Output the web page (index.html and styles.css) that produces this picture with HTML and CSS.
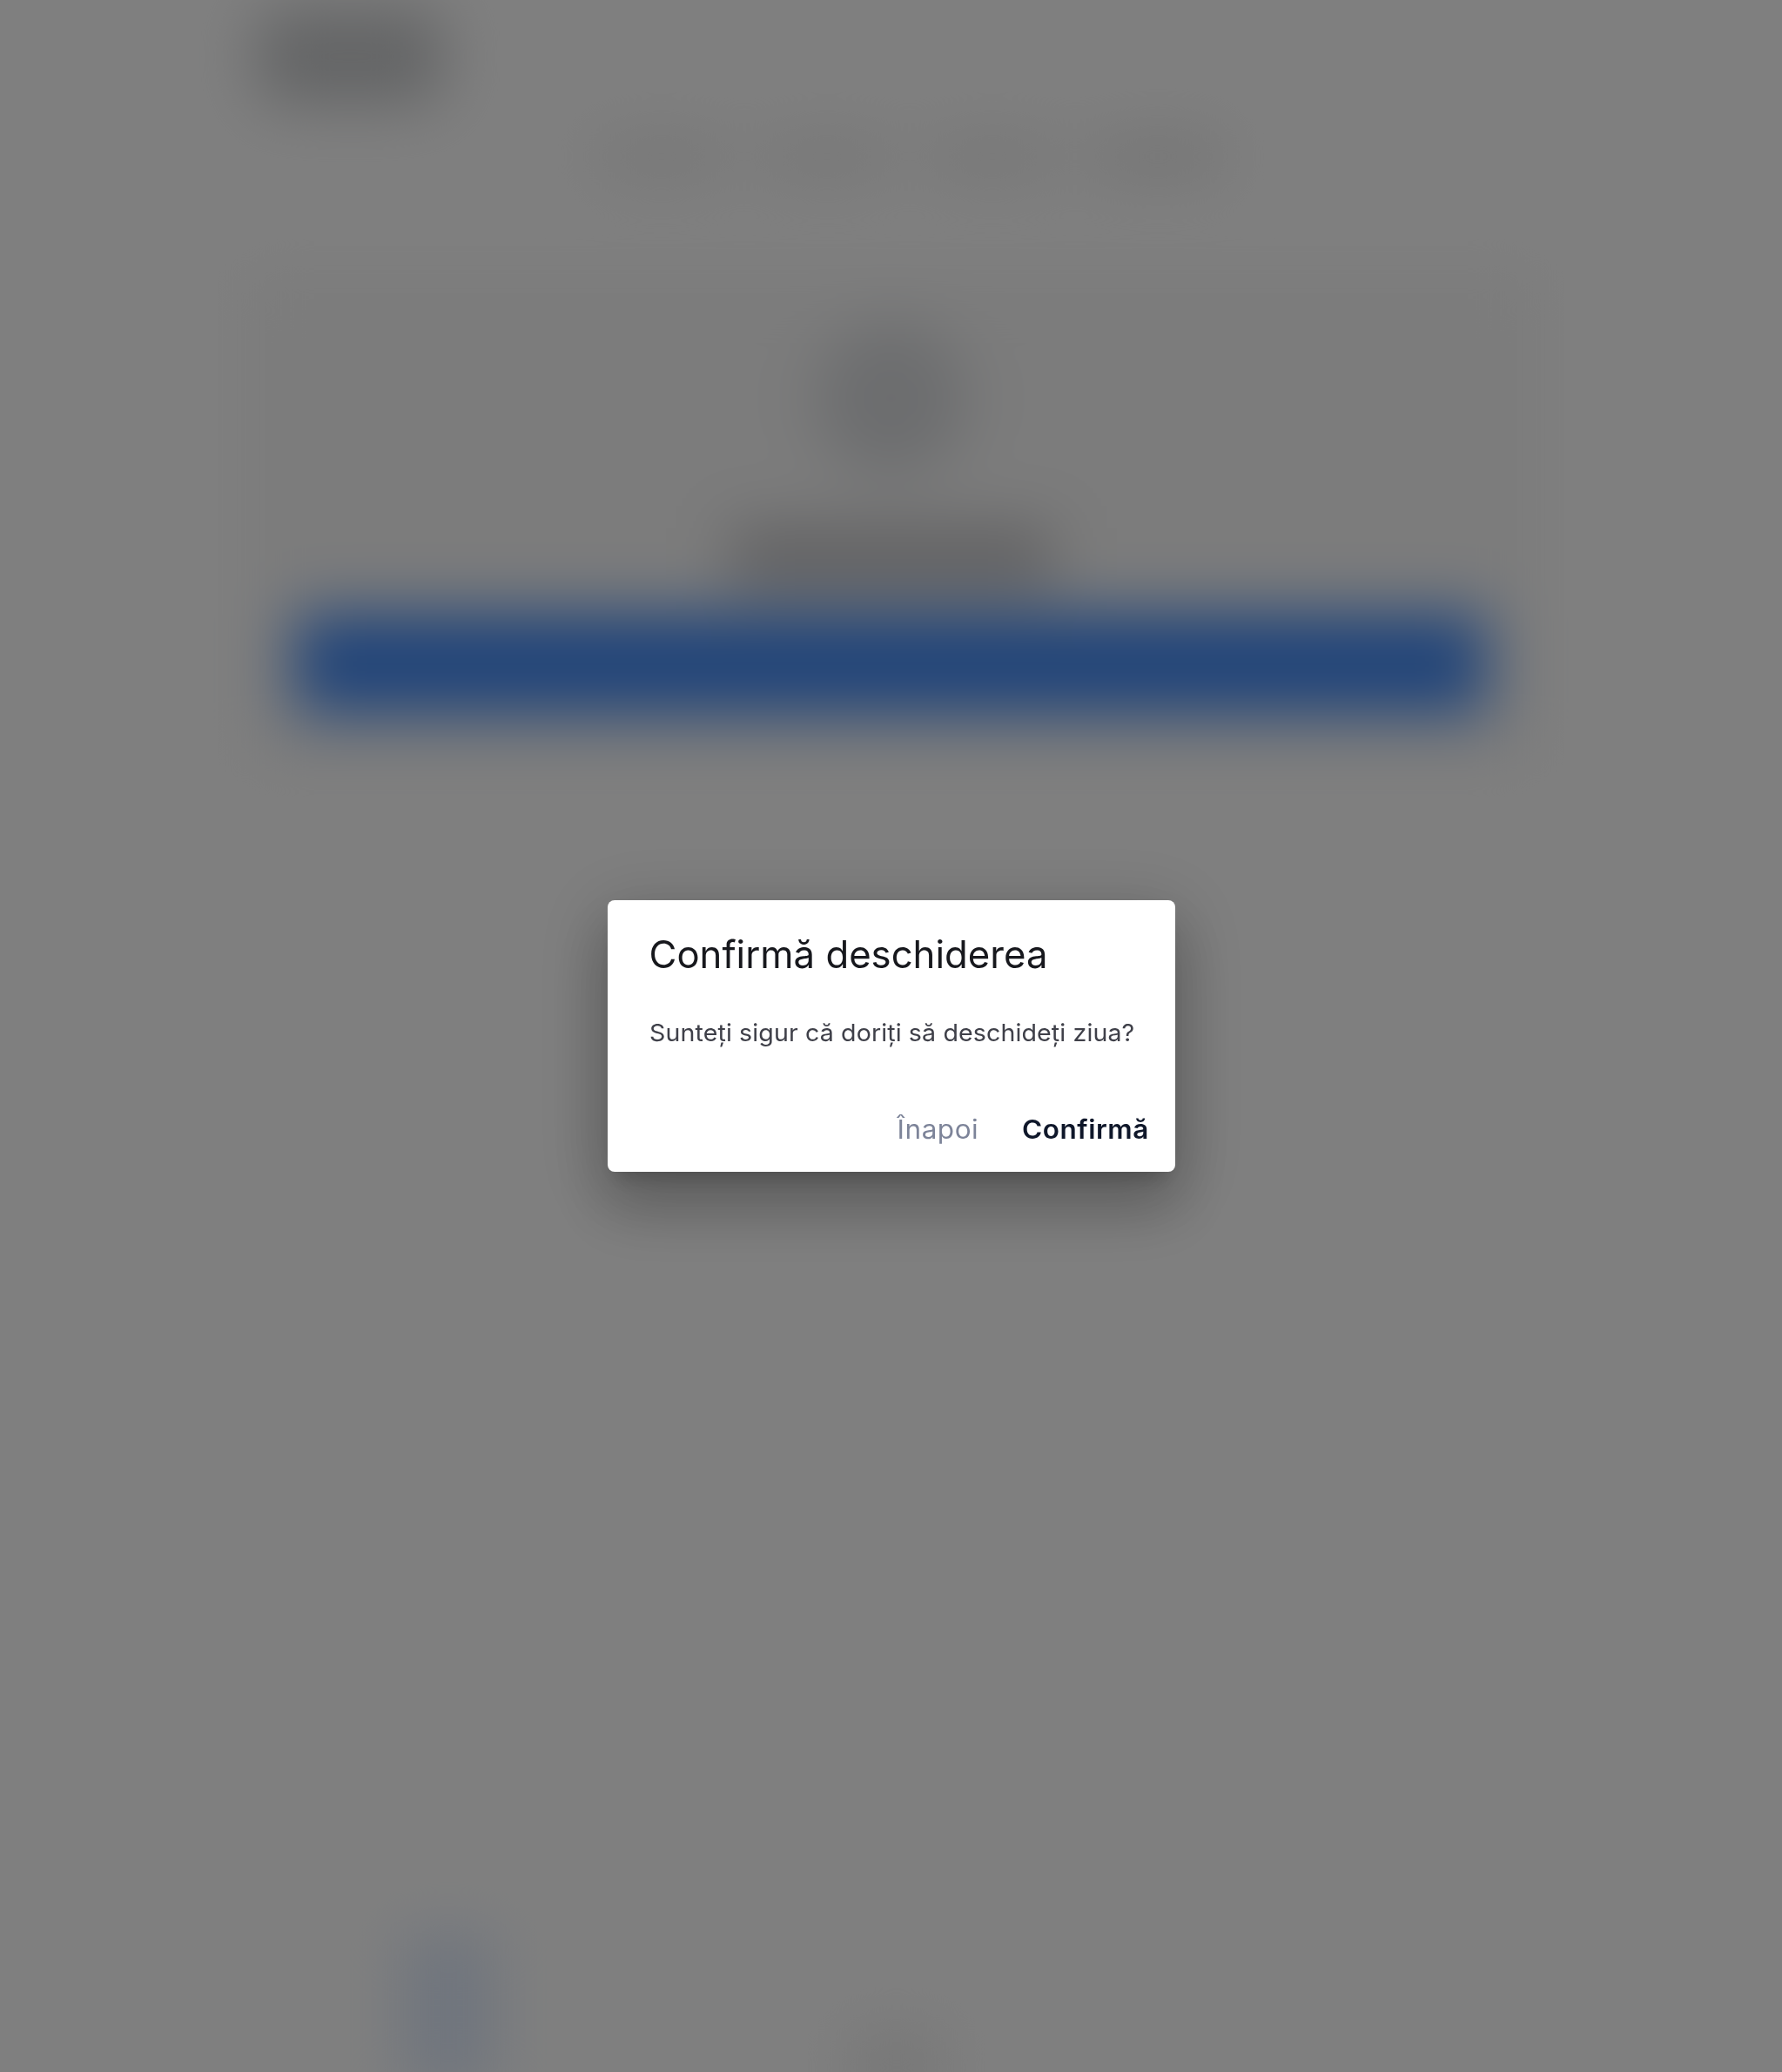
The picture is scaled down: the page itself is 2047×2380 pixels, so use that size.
FILE: index.html
```html
<!DOCTYPE html>
<html lang="ro">
<head>
<meta charset="utf-8">
<title>Confirmă deschiderea</title>
<link rel="stylesheet" href="styles.css">
</head>
<body>
<div class="page">
  <header class="header">
    <div class="logo"></div>
    <nav class="nav">
      <span class="nav-item"></span>
      <span class="nav-item"></span>
      <span class="nav-item"></span>
      <span class="nav-item dark"></span>
    </nav>
  </header>
  <main class="card">
    <div class="avatar"></div>
    <div class="heading"></div>
    <div class="action"></div>
  </main>
  <footer class="footer">
    <div class="foot-blue"></div>
    <div class="foot-grey"></div>
  </footer>
</div>
<div class="overlay">
  <div class="dialog" role="dialog">
    <h2 class="title">Confirmă deschiderea</h2>
    <p class="message">Sunteți sigur că doriți să deschideți ziua?</p>
    <div class="actions">
      <button class="btn btn-back">Înapoi</button>
      <button class="btn btn-confirm">Confirmă</button>
    </div>
  </div>
</div>
</body>
</html>
```
FILE: styles.css
```css
* { box-sizing: border-box; }
html, body { margin: 0; height: 100%; }
body { background: #fff; font-family: Inter, "Noto Sans", sans-serif; overflow: hidden; }
.page { height: 2380px; filter: blur(35px); display: flex; flex-direction: column; }
.header { height: 310px; flex: none; display: flex; align-items: flex-start; padding-left: 295px; }
.logo { width: 215px; height: 110px; margin-top: 10px; background: #c8cacc; border-radius: 30px; }
.nav { display: flex; gap: 40px; margin: 160px 0 0 175px; }
.nav-item { width: 150px; height: 40px; background: #eaeaea; }
.nav-item.dark { background: #e4e4e4; }
.card { flex: none; margin: 0 277px; height: 570px; padding-top: 60px; display: flex; flex-direction: column; align-items: center; background: #f8f8f8; }
.avatar { width: 175px; height: 175px; border-radius: 50%; background: #d9dbde; }
.heading { width: 370px; height: 70px; margin-top: 60px; background: #c2c2c5; }
.action { align-self: stretch; height: 115px; margin: 30px 62px 0; border-radius: 12px; background: #4188f3; }
.footer { flex: 1; display: flex; align-items: flex-end; padding-left: 460px; gap: 405px; }
.foot-blue { width: 110px; height: 180px; margin-bottom: -20px; background: #dfeafb; }
.foot-grey { width: 110px; height: 90px; margin-bottom: -40px; background: #efefef; }
.overlay { position: fixed; inset: 0; background: rgba(0,0,0,.5); display: flex; justify-content: center; align-items: flex-start; padding-top: 1034px; }
.dialog { width: 652px; height: 312px; padding: 35px 30px 0 48px; background: #fff; border-radius: 8px; box-shadow: 0 16px 22px -10px rgba(0,0,0,.2), 0 40px 70px 6px rgba(0,0,0,.18), 0 16px 80px 14px rgba(0,0,0,.14); display: flex; flex-direction: column; }
.title { margin: 0; font-size: 43.7px; line-height: 56px; font-weight: 400; color: #17181d; white-space: nowrap; }
.message { margin: 43px 0 0; font-size: 27.5px; line-height: 36px; letter-spacing: .1px; color: #3f4049; white-space: nowrap; transform: scaleX(1.04); transform-origin: left center; }
.actions { display: flex; justify-content: flex-end; gap: 56px; margin-top: 71px; }
.btn { border: 0; background: none; padding: 0; font: inherit; font-size: 30px; line-height: 44px; letter-spacing: .5px; transform: scaleX(1.05); transform-origin: right center; }
.btn-back { color: #7d8499; }
.btn-confirm { color: #0f172a; font-weight: 600; }
```
